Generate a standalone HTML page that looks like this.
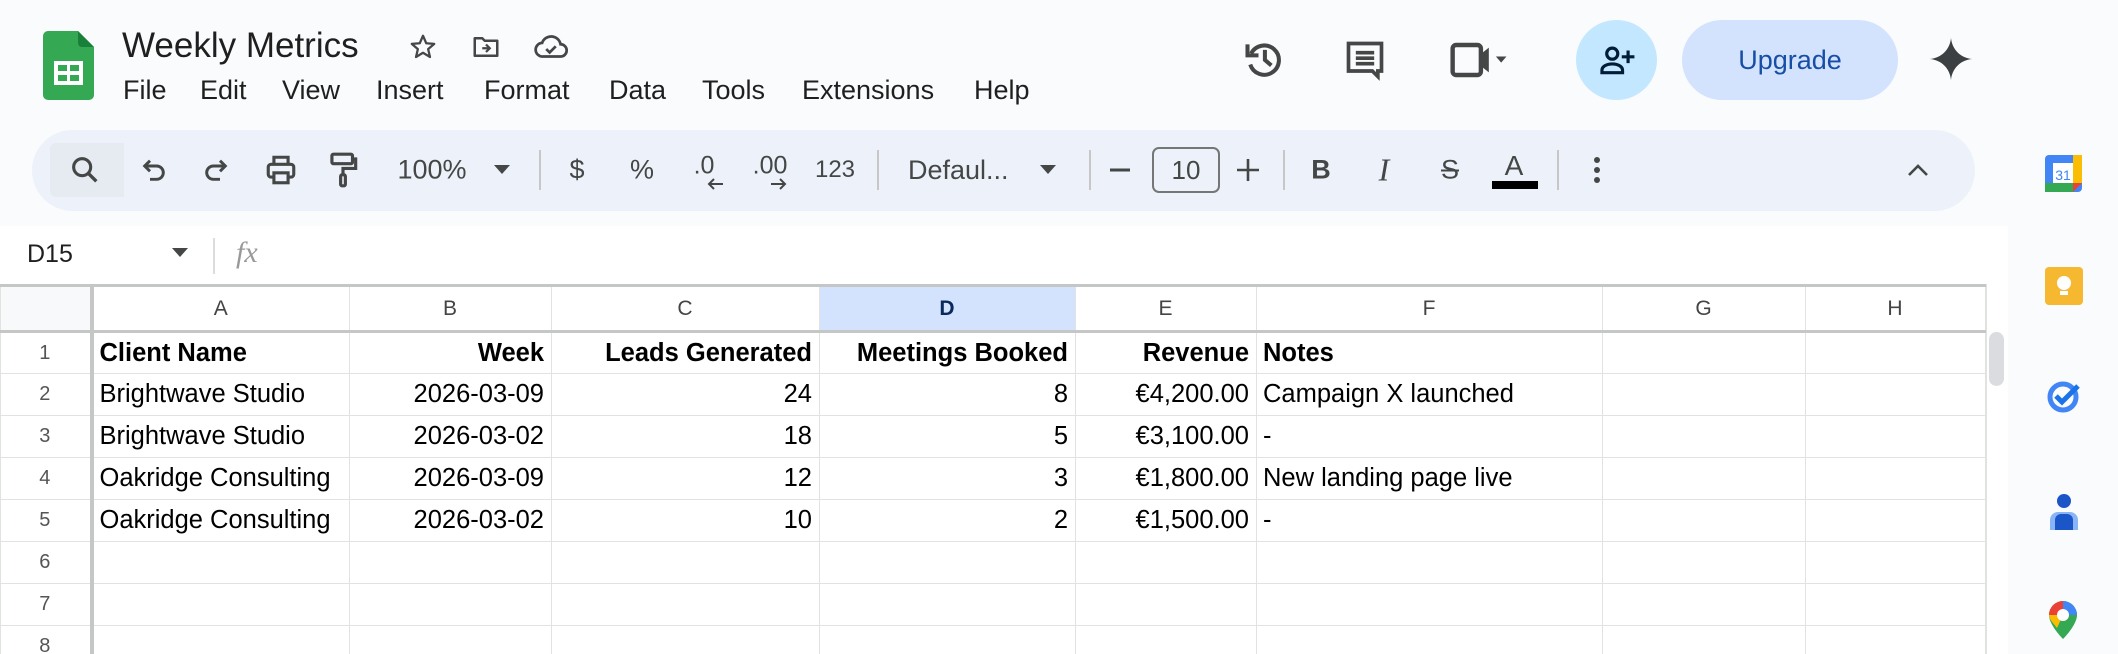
<!DOCTYPE html>
<html><head><meta charset="utf-8"><style>
*{margin:0;padding:0;box-sizing:border-box}
html,body{width:2118px;height:654px;overflow:hidden}
body{background:#f9fbfd;font-family:"Liberation Sans",Arial,sans-serif;position:relative;color:#1f1f1f}
.a{position:absolute}
.menu{position:absolute;top:75px;font-size:27px;color:#1f1f1f}
.tb{position:absolute;top:170px;transform:translate(-50%,-50%);color:#444746;font-size:27px}
.sep{position:absolute;top:150px;width:2px;height:40px;background:#c7c7c7}
table{position:absolute;left:0;top:284px;border-collapse:collapse;table-layout:fixed;background:#fff}
td{border:1px solid #e1e3e1;height:42px;font-size:25.5px;padding:0 7px 0 6px;white-space:nowrap;overflow:hidden;color:#000}
tr.h td{height:46px;font-size:21px;text-align:center;color:#444;border-top:3px solid #c4c7c5;border-bottom:3px solid #c4c7c5}
td.rh{font-size:20px;text-align:center;color:#555;border-right:4px solid #c4c7c5;background:#fff}
td.r{text-align:right}
b{font-weight:bold}
</style></head><body>
<svg class="a" style="left:43px;top:31px" width="51" height="70" viewBox="0 0 51 70"><path d="M5 0H35L51 16V64a5 5 0 0 1-5 5H5a5 5 0 0 1-5-5V5a5 5 0 0 1 5-5z" fill="#34a853"/><path d="M35 0L51 16H39a4 4 0 0 1-4-4z" fill="#188038"/><rect x="11" y="30" width="29" height="24" fill="#fff"/><rect x="15" y="34" width="9" height="6" fill="#34a853"/><rect x="27" y="34" width="9" height="6" fill="#34a853"/><rect x="15" y="44" width="9" height="6" fill="#34a853"/><rect x="27" y="44" width="9" height="6" fill="#34a853"/></svg>
<div class="a" style="left:122px;top:26px;font-size:35px;color:#1f1f1f">Weekly Metrics</div>
<svg class="a" style="left:408px;top:32px" width="30" height="30" viewBox="0 0 24 24"><path d="M12 3l2.6 6 6.4.5-4.9 4.2 1.5 6.3L12 16.6 6.4 20l1.5-6.3L3 9.5l6.4-.5z" fill="none" stroke="#444746" stroke-width="1.8" stroke-linejoin="round"/></svg>
<svg class="a" style="left:470px;top:32px" width="32" height="30" viewBox="0 0 24 24"><path d="M3 5h6l2 2h10v12H3z" fill="none" stroke="#444746" stroke-width="2" stroke-linejoin="round"/><path d="M9 13h6m-3-3l3 3-3 3" fill="none" stroke="#444746" stroke-width="1.8"/></svg>
<svg class="a" style="left:533px;top:32px" width="36" height="30" viewBox="0 0 26 22"><path d="M7 18a5 5 0 0 1-.5-10A7 7 0 0 1 20 9a4.5 4.5 0 0 1 0 9z" fill="none" stroke="#444746" stroke-width="2"/><path d="M9.5 12.5l2.5 2.5 4.5-4.5" fill="none" stroke="#444746" stroke-width="2"/></svg>
<div class="menu" style="left:123px">File</div>
<div class="menu" style="left:200px">Edit</div>
<div class="menu" style="left:282px">View</div>
<div class="menu" style="left:376px">Insert</div>
<div class="menu" style="left:484px">Format</div>
<div class="menu" style="left:609px">Data</div>
<div class="menu" style="left:702px">Tools</div>
<div class="menu" style="left:802px">Extensions</div>
<div class="menu" style="left:974px">Help</div>
<svg class="a" style="left:1242px;top:37px" width="44" height="44" viewBox="0 0 24 24"><path d="M5 9A8 8 0 1 1 4.5 15" fill="none" stroke="#444746" stroke-width="2.2"/><path d="M3 4v6h6" fill="none" stroke="#444746" stroke-width="2.2"/><path d="M12.5 7v5.5l3.5 3" fill="none" stroke="#444746" stroke-width="2.2"/></svg>
<svg class="a" style="left:1343px;top:38px" width="44" height="44" viewBox="0 0 24 24"><path d="M3 3h18v15h-2v3l-3-3H3z" fill="none" stroke="#444746" stroke-width="2"/><path d="M7 8h10M7 11h10M7 14h10" stroke="#444746" stroke-width="2"/></svg>
<svg class="a" style="left:1450px;top:42px" width="60" height="36" viewBox="0 0 34 20"><rect x="1.5" y="1.5" width="16" height="17" rx="2" fill="none" stroke="#444746" stroke-width="2.5"/><path d="M17 7l5-4v14l-5-4z" fill="#444746"/><path d="M26 8h6l-3 3.5z" fill="#444746"/></svg>
<div class="a" style="left:1576px;top:20px;width:81px;height:80px;border-radius:50%;background:#c2e7ff"></div>
<svg class="a" style="left:1598px;top:41px" width="38" height="38" viewBox="0 0 24 24"><circle cx="9" cy="8" r="3.5" fill="none" stroke="#001d35" stroke-width="2"/><path d="M2.5 20v-1.5c0-2.5 3-4 6.5-4s6.5 1.5 6.5 4V20z" fill="none" stroke="#001d35" stroke-width="2"/><path d="M19 6v8M15 10h8" stroke="#001d35" stroke-width="2"/></svg>
<div class="a" style="left:1682px;top:20px;width:216px;height:80px;border-radius:40px;background:#d3e3fd;font-size:27px;text-align:center;line-height:80px;color:#174ea6">Upgrade</div>
<svg class="a" style="left:1928px;top:36px" width="46" height="46" viewBox="0 0 24 24"><path d="M12 1C12.5 7 17 11.5 23 12 17 12.5 12.5 17 12 23 11.5 17 7 12.5 1 12 7 11.5 11.5 7 12 1z" fill="#3c4043"/></svg>
<div class="a" style="left:32px;top:130px;width:1943px;height:81px;border-radius:41px;background:#edf2fa"></div>
<div class="a" style="left:50px;top:143px;width:74px;height:54px;border-radius:6px 0 0 6px;background:#e6ebf2"></div>
<svg class="tb" style="left:85px" width="34" height="34" viewBox="0 0 24 24"><circle cx="10" cy="10" r="6" fill="none" stroke="#444746" stroke-width="2.2"/><path d="M14.5 14.5L20 20" stroke="#444746" stroke-width="2.4"/></svg>
<svg class="tb" style="left:154px" width="32" height="32" viewBox="0 0 24 24"><path d="M9 5L5 9l4 4" fill="none" stroke="#444746" stroke-width="2.2"/><path d="M5 9h9a5 5 0 0 1 0 10H9" fill="none" stroke="#444746" stroke-width="2.2"/></svg>
<svg class="tb" style="left:216px" width="32" height="32" viewBox="0 0 24 24"><path d="M15 5l4 4-4 4" fill="none" stroke="#444746" stroke-width="2.2"/><path d="M19 9h-9a5 5 0 0 0 0 10h5" fill="none" stroke="#444746" stroke-width="2.2"/></svg>
<svg class="tb" style="left:281px" width="34" height="34" viewBox="0 0 24 24"><path d="M7 8V3h10v5" fill="none" stroke="#444746" stroke-width="2.2"/><rect x="3" y="8" width="18" height="9" rx="2" fill="none" stroke="#444746" stroke-width="2.2"/><rect x="7" y="14" width="10" height="7" fill="#edf2fa" stroke="#444746" stroke-width="2.2"/></svg>
<svg class="tb" style="left:343px" width="32" height="38" viewBox="0 0 20 24"><rect x="3" y="2" width="13" height="6" rx="1" fill="none" stroke="#444746" stroke-width="2"/><path d="M16 5h2v6h-8v4" fill="none" stroke="#444746" stroke-width="2"/><rect x="8.5" y="15" width="3" height="7" rx="1" fill="none" stroke="#444746" stroke-width="2"/></svg>
<div class="tb" style="left:432px">100%</div>
<svg class="tb" style="left:502px" width="16" height="10" viewBox="0 0 16 10"><path d="M0 0h16L8 9z" fill="#444746"/></svg>
<div class="sep" style="left:539px"></div>
<div class="tb" style="left:577px">$</div>
<div class="tb" style="left:642px">%</div>
<div class="tb" style="left:704px;font-size:25px;top:166px">.0</div>
<svg class="a" style="left:706px;top:177px" width="18" height="14" viewBox="0 0 18 14"><path d="M17 7H3M8 2L3 7l5 5" fill="none" stroke="#444746" stroke-width="2"/></svg>
<div class="tb" style="left:770px;font-size:25px;top:166px">.00</div>
<svg class="a" style="left:770px;top:177px" width="18" height="14" viewBox="0 0 18 14"><path d="M1 7h14M10 2l5 5-5 5" fill="none" stroke="#444746" stroke-width="2"/></svg>
<div class="tb" style="left:835px;font-size:24px">123</div>
<div class="sep" style="left:877px"></div>
<div class="a" style="left:908px;top:155px;font-size:27px;color:#444746">Defaul...</div>
<svg class="tb" style="left:1048px" width="16" height="10" viewBox="0 0 16 10"><path d="M0 0h16L8 9z" fill="#444746"/></svg>
<div class="sep" style="left:1089px"></div>
<div class="tb" style="left:1120px;width:20px;height:3px;background:#444746"></div>
<div class="a" style="left:1152px;top:147px;width:68px;height:46px;border:2px solid #747775;border-radius:7px;font-size:26px;text-align:center;line-height:42px;color:#444746">10</div>
<svg class="tb" style="left:1248px" width="26" height="26" viewBox="0 0 26 26"><path d="M13 2v22M2 13h22" stroke="#444746" stroke-width="2.6"/></svg>
<div class="sep" style="left:1283px"></div>
<div class="tb" style="left:1321px;font-weight:bold">B</div>
<div class="tb" style="left:1384px;font-family:'Liberation Serif',serif;font-style:italic;font-size:32px">I</div>
<div class="tb" style="left:1450px;text-decoration:line-through">S</div>
<div class="tb" style="left:1514px;top:166px;font-size:28px">A</div>
<div class="a" style="left:1492px;top:181px;width:46px;height:8px;background:#000"></div>
<div class="sep" style="left:1557px"></div>
<svg class="tb" style="left:1597px" width="8" height="28" viewBox="0 0 8 28"><circle cx="4" cy="4" r="3" fill="#444746"/><circle cx="4" cy="14" r="3" fill="#444746"/><circle cx="4" cy="24" r="3" fill="#444746"/></svg>
<svg class="tb" style="left:1918px" width="24" height="16" viewBox="0 0 24 16"><path d="M3 13l9-9 9 9" fill="none" stroke="#444746" stroke-width="2.6"/></svg>
<div class="a" style="left:0;top:226px;width:2008px;height:58px;background:#fff"></div>
<div class="a" style="left:27px;top:240px;font-size:25px">D15</div>
<svg class="a" style="left:172px;top:248px" width="16" height="10" viewBox="0 0 16 10"><path d="M0 0h16L8 9z" fill="#444746"/></svg>
<div class="a" style="left:213px;top:238px;width:2px;height:36px;background:#dadce0"></div>
<div class="a" style="left:236px;top:236px;font-family:'Liberation Serif',serif;font-style:italic;font-size:30px;color:#999">fx</div>
<div class="a" style="left:0;top:284px;width:2008px;height:370px;background:#fff;overflow:hidden">
<table style="top:0">
<colgroup><col style="width:91px"><col style="width:258px"><col style="width:202px"><col style="width:268px"><col style="width:256px"><col style="width:181px"><col style="width:346px"><col style="width:203px"><col style="width:180px"></colgroup>
<tr class="h"><td class="rh" style="background:#f8f9fa;border-bottom:3px solid #c4c7c5;border-top:3px solid #c4c7c5"></td><td>A</td><td>B</td><td>C</td><td style="background:#d3e3fd;font-weight:bold;color:#0b2a5c">D</td><td>E</td><td>F</td><td>G</td><td>H</td></tr>
<tr><td class="rh">1</td><td><b>Client Name</b></td><td class="r"><b>Week</b></td><td class="r"><b>Leads Generated</b></td><td class="r"><b>Meetings Booked</b></td><td class="r"><b>Revenue</b></td><td><b>Notes</b></td><td></td><td></td></tr>
<tr><td class="rh">2</td><td>Brightwave Studio</td><td class="r">2026-03-09</td><td class="r">24</td><td class="r">8</td><td class="r">€4,200.00</td><td>Campaign X launched</td><td></td><td></td></tr>
<tr><td class="rh">3</td><td>Brightwave Studio</td><td class="r">2026-03-02</td><td class="r">18</td><td class="r">5</td><td class="r">€3,100.00</td><td>-</td><td></td><td></td></tr>
<tr><td class="rh">4</td><td>Oakridge Consulting</td><td class="r">2026-03-09</td><td class="r">12</td><td class="r">3</td><td class="r">€1,800.00</td><td>New landing page live</td><td></td><td></td></tr>
<tr><td class="rh">5</td><td>Oakridge Consulting</td><td class="r">2026-03-02</td><td class="r">10</td><td class="r">2</td><td class="r">€1,500.00</td><td>-</td><td></td><td></td></tr>
<tr><td class="rh">6</td><td></td><td></td><td></td><td></td><td></td><td></td><td></td><td></td></tr>
<tr><td class="rh">7</td><td></td><td></td><td></td><td></td><td></td><td></td><td></td><td></td></tr>
<tr><td class="rh">8</td><td></td><td></td><td></td><td></td><td></td><td></td><td></td><td></td></tr>
</table>
</div>
<div class="a" style="left:1986px;top:284px;width:22px;height:370px;background:#fff;border-left:1px solid #e1e3e1"></div>
<div class="a" style="left:1989px;top:332px;width:15px;height:54px;border-radius:8px;background:#dadce0"></div>
<div class="a" style="left:2008px;top:0;width:110px;height:654px;background:#f9fbfd"></div>
<svg class="a" style="left:2045px;top:155px" width="37" height="37" viewBox="0 0 37 37"><rect width="37" height="37" rx="4" fill="#4285f4"/><rect x="28" y="0" width="9" height="28" fill="#fbbc04"/><rect x="0" y="28" width="28" height="9" fill="#34a853"/><path d="M28 28h9l-9 9z" fill="#ea4335"/><rect x="8" y="8" width="20" height="20" fill="#fff"/><text x="18" y="25" font-size="14" text-anchor="middle" fill="#4285f4" font-family="Liberation Sans">31</text></svg>
<svg class="a" style="left:2045px;top:267px" width="38" height="38" viewBox="0 0 38 38"><rect width="38" height="38" rx="4" fill="#f6b830"/><circle cx="19" cy="16" r="7" fill="#fff"/><rect x="15" y="24" width="8" height="4" fill="#fff"/></svg>
<svg class="a" style="left:2045px;top:377px" width="38" height="38" viewBox="0 0 38 38"><circle cx="18" cy="20" r="13" fill="none" stroke="#4285f4" stroke-width="5"/><path d="M11 19l6 6 16-16" fill="none" stroke="#1a73e8" stroke-width="5"/></svg>
<svg class="a" style="left:2048px;top:492px" width="32" height="40" viewBox="0 0 32 40"><circle cx="16" cy="9" r="7" fill="#1a56c8"/><path d="M2 38v-10a8 8 0 0 1 8-8h12a8 8 0 0 1 8 8v10z" fill="#8ab4f8"/><path d="M7 38v-10a6 6 0 0 1 6-6h6a6 6 0 0 1 6 6v10z" fill="#1a56c8"/></svg>
<svg class="a" style="left:2048px;top:600px" width="30" height="40" viewBox="0 0 30 40"><path d="M15 1a14 14 0 0 1 14 14c0 10-14 24-14 24S1 25 1 15A14 14 0 0 1 15 1z" fill="#34a853"/><path d="M15 1a14 14 0 0 1 14 14H15z" fill="#4285f4"/><path d="M1 15A14 14 0 0 1 15 1v14z" fill="#ea4335"/><path d="M1 15h14l-6 13C5 23 1 19 1 15z" fill="#fbbc04"/><circle cx="15" cy="15" r="6" fill="#fff"/></svg>
</body></html>
